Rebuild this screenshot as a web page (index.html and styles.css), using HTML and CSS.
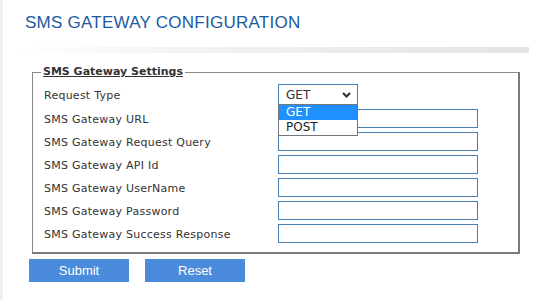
FILE: index.html
```html
<!DOCTYPE html>
<html>
<head>
<meta charset="utf-8">
<link rel="stylesheet" href="styles.css">
</head>
<body>
<div class="page">
  <h1 class="title">SMS GATEWAY CONFIGURATION</h1>
  <div class="divider"></div>
  <form class="form">
    <fieldset class="settings">
      <legend class="legend">SMS Gateway Settings</legend>
      <div class="grid">
        <label class="label">Request Type</label>
        <div class="select-wrap">
          <div class="select"><span>GET</span><svg class="chev" width="9" height="6" viewBox="0 0 9 6"><path d="M1 1 L4.5 4.5 L8 1" fill="none" stroke="#333" stroke-width="2.2"/></svg></div>
          <ul class="dropdown">
            <li class="opt active">GET</li>
            <li class="opt">POST</li>
          </ul>
        </div>
        <label class="label">SMS Gateway URL</label>
        <input class="field" type="text">
        <label class="label">SMS Gateway Request Query</label>
        <input class="field" type="text">
        <label class="label">SMS Gateway API Id</label>
        <input class="field" type="text">
        <label class="label">SMS Gateway UserName</label>
        <input class="field" type="text">
        <label class="label">SMS Gateway Password</label>
        <input class="field" type="text">
        <label class="label">SMS Gateway Success Response</label>
        <input class="field" type="text">
      </div>
    </fieldset>
    <div class="actions">
      <button class="btn" type="button">Submit</button>
      <button class="btn" type="button">Reset</button>
    </div>
  </form>
</div>
</body>
</html>
```
FILE: styles.css
```css
html, body {
  margin: 0;
  padding: 0;
  background: #fff;
}
.page {
  border-left: 3px solid #efefef;
  min-height: 300px;
  box-sizing: border-box;
  font-family: "DejaVu Sans", Verdana, sans-serif;
  color: #333;
}
.title {
  margin: 0;
  padding: 13px 0 0 22px;
  font-family: "Liberation Sans", Arial, sans-serif;
  font-size: 17px;
  line-height: 20px;
  font-weight: normal;
  letter-spacing: 0.25px;
  color: #1a5aa3;
}
.divider {
  margin: 14px 0 0 12px;
  width: 514px;
  height: 6px;
  background: linear-gradient(to right, #ffffff 0%, #f2f2f2 35%, #e4e4e4 100%);
}
.form {
  margin: 0;
}
.settings {
  margin: 12px 0 0 29px;
  width: 488px;
  box-sizing: border-box;
  padding: 5px 0 9px 11px;
  border: 1px solid #8a8a8a;
  border-right: 2px solid #7a7a7a;
  border-bottom: 2px solid #7a7a7a;
  min-width: 0;
}
.legend {
  margin-left: -3px;
  padding: 0 2px;
  font-size: 11px;
  line-height: 14px;
  font-weight: bold;
  text-decoration: underline;
  color: #333;
}
.grid {
  display: grid;
  grid-template-columns: 234px 200px;
  row-gap: 4px;
  align-items: center;
}
.label {
  font-size: 11px;
  line-height: 14px;
  padding-top: 2px;
  letter-spacing: 0.25px;
  color: #333;
}
.field {
  display: block;
  width: 200px;
  height: 19px;
  box-sizing: border-box;
  margin: 0;
  padding: 0 4px;
  border: 1px solid #4a80b0;
  background: #fff;
  outline: none;
}
.select-wrap {
  position: relative;
  width: 80px;
  height: 21px;
}
.select {
  box-sizing: border-box;
  width: 80px;
  height: 21px;
  border: 1px solid #4a80b0;
  display: flex;
  align-items: center;
  justify-content: space-between;
  padding: 0 6px 0 7px;
  font-size: 12px;
  color: #333;
}
.chev {
  display: block;
}
.dropdown {
  position: absolute;
  left: 0;
  top: 20px;
  width: 80px;
  box-sizing: border-box;
  margin: 0;
  padding: 0;
  list-style: none;
  border: 1px solid #767676;
  background: #fff;
  z-index: 2;
}
.opt {
  height: 15px;
  line-height: 15px;
  padding-left: 7px;
  font-size: 12px;
  color: #222;
}
.opt.active {
  background: #1e90ff;
  color: #fff;
}
.actions {
  display: flex;
  gap: 16px;
  margin: 5px 0 0 26px;
}
.btn {
  width: 100px;
  height: 23px;
  border: none;
  margin: 0;
  padding: 0;
  background: #4a8cdb;
  color: #fff;
  font-family: "Liberation Sans", Arial, sans-serif;
  font-size: 13px;
}
```
